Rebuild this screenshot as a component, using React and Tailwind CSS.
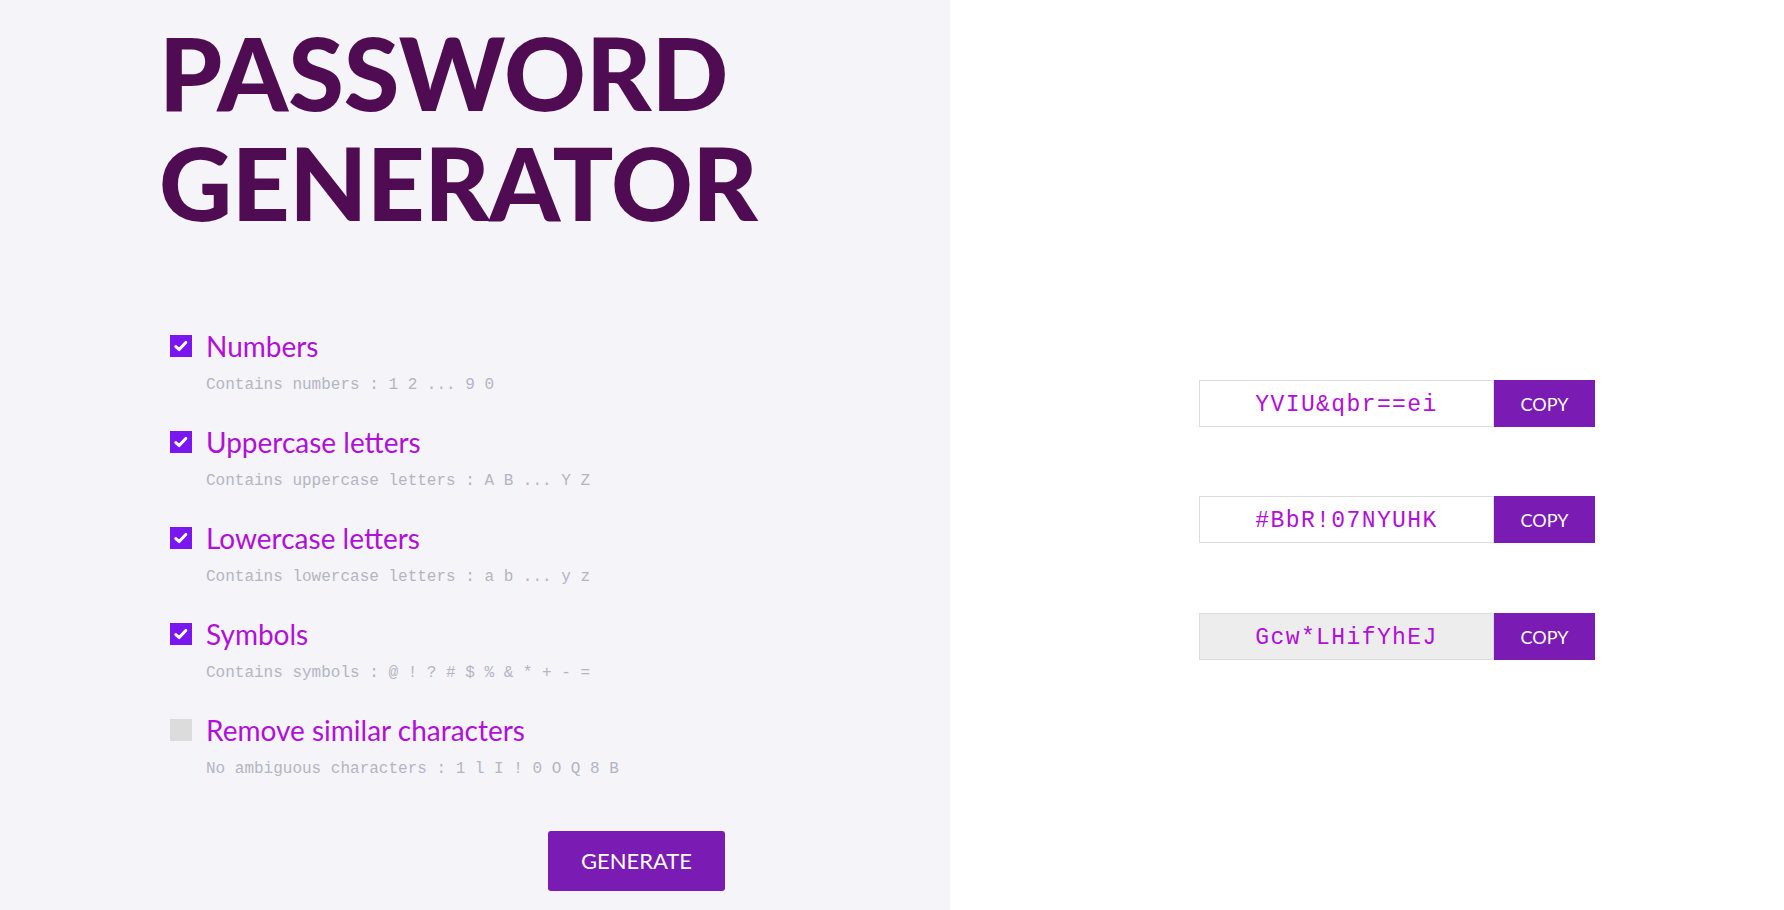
import React from "react";

const options = [
  { label: "Numbers", desc: "Contains numbers : 1 2 ... 9 0", checked: true },
  { label: "Uppercase letters", desc: "Contains uppercase letters : A B ... Y Z", checked: true },
  { label: "Lowercase letters", desc: "Contains lowercase letters : a b ... y z", checked: true },
  { label: "Symbols", desc: "Contains symbols : @ ! ? # $ % & * + - =", checked: true },
  { label: "Remove similar characters", desc: "No ambiguous characters : 1 l I ! 0 O Q 8 B", checked: false },
];

const passwords = [
  { value: "YVIU&qbr==ei", bg: "bg-white" },
  { value: "#BbR!07NYUHK", bg: "bg-white" },
  { value: "Gcw*LHifYhEJ", bg: "bg-[#ededed]" },
];

function Check({ checked }) {
  if (!checked) return <div className="w-[22px] h-[22px] shrink-0 bg-[#dcdcdc]" />;
  return (
    <div className="w-[22px] h-[22px] shrink-0 bg-[#7a16f0] flex items-center justify-center">
      <svg width="16" height="16" viewBox="0 0 16 16">
        <path d="M2.8 8.6 L6.2 11.6 L12.8 4.4" fill="none" stroke="white" strokeWidth="3" strokeLinecap="round" strokeLinejoin="round" />
      </svg>
    </div>
  );
}

export default function App() {
  const lato = { fontFamily: "Lato, 'Noto Sans', sans-serif" };
  return (
    <div className="flex w-full h-[910px] overflow-hidden" style={lato}>
      <div className="w-[950px] shrink-0 bg-[#f4f4f9] flex flex-col">
        <h1 className="pl-[159px] pt-[17px] text-[101px] leading-[110px] font-black text-[#4f0c52]">
          PASSWORD
          <br />
          <span className="tracking-[-0.5px]">GENERATOR</span>
        </h1>
        <div className="pl-[170px] mt-[94px] flex flex-col gap-[32px]">
          {options.map((o) => (
            <div key={o.label} className="flex flex-col">
              <div className="flex items-center gap-[14px]">
                <Check checked={o.checked} />
                <span className="text-[28px] leading-[30px] text-[#b010d8]">{o.label}</span>
              </div>
              <div
                className="pl-[36px] mt-[12px] mb-[-2px] text-[16px] leading-[24px] text-[#b4b4c2]"
                style={{ fontFamily: "'Liberation Mono', monospace" }}
              >
                {o.desc}
              </div>
            </div>
          ))}
        </div>
        <div className="pl-[548px] mt-[52px]">
          <button className="w-[177px] h-[60px] rounded-[3px] bg-[#7a1bb4] text-white text-[22px] leading-none">
            GENERATE
          </button>
        </div>
      </div>
      <div className="flex-1 bg-white flex flex-col pl-[249px] pt-[380px]">
        {passwords.map((p, i) => (
          <div key={p.value} className={`flex h-[47px] ${i === 0 ? "" : i === 1 ? "mt-[69px]" : "mt-[70px]"}`}>
            <div
              className={`w-[295px] h-full pt-[4px] border border-[#dcdcdc] ${p.bg} flex items-center justify-center text-[23px] tracking-[1.4px] text-[#b010d8]`}
              style={{ fontFamily: "'Liberation Mono', monospace" }}
            >
              {p.value}
            </div>
            <button className="w-[101px] h-full pt-[1px] bg-[#7a1bb4] text-white text-[18px]">COPY</button>
          </div>
        ))}
      </div>
    </div>
  );
}
